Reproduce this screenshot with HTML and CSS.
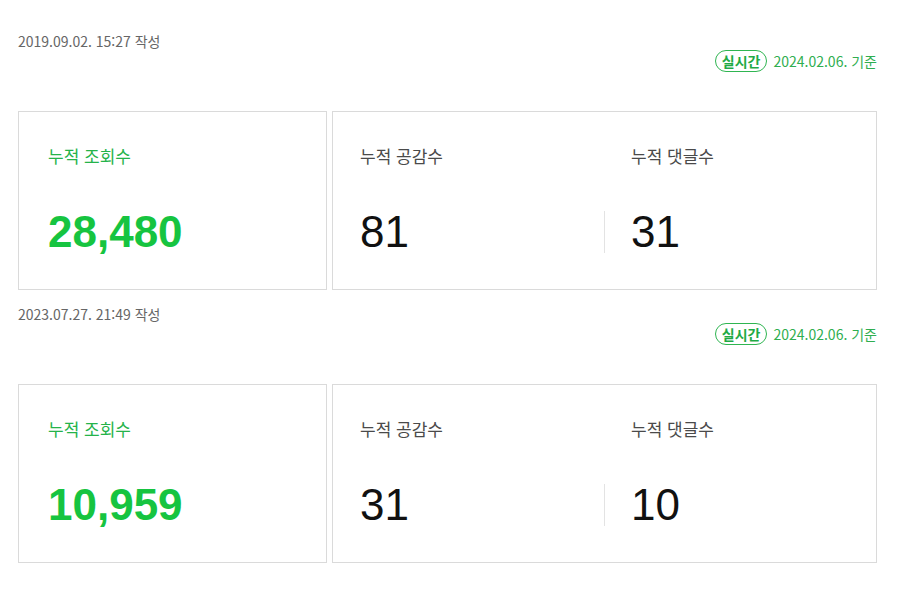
FILE: index.html
```html
<!DOCTYPE html>
<html lang="ko">
<head>
<meta charset="utf-8">
<title>통계</title>
<link rel="stylesheet" href="styles.css">
</head>
<body>
<div class="page">
  <section class="post">
    <div class="date">2019.09.02. 15:27 작성</div>
    <div class="meta">
      <span class="badge">실시간</span>
      <span class="basis">2024.02.06. 기준</span>
    </div>
    <div class="cards">
      <div class="card card-main">
        <div class="label label-green">누적 조회수</div>
        <div class="value value-green">28,480</div>
      </div>
      <div class="card card-sub">
        <div class="col">
          <div class="label">누적 공감수</div>
          <div class="value">81</div>
        </div>
        <div class="col col-right">
          <div class="label">누적 댓글수</div>
          <div class="value value-divided">31</div>
        </div>
      </div>
    </div>
  </section>
  <section class="post">
    <div class="date">2023.07.27. 21:49 작성</div>
    <div class="meta">
      <span class="badge">실시간</span>
      <span class="basis">2024.02.06. 기준</span>
    </div>
    <div class="cards">
      <div class="card card-main">
        <div class="label label-green">누적 조회수</div>
        <div class="value value-green">10,959</div>
      </div>
      <div class="card card-sub">
        <div class="col">
          <div class="label">누적 공감수</div>
          <div class="value">31</div>
        </div>
        <div class="col col-right">
          <div class="label">누적 댓글수</div>
          <div class="value value-divided">10</div>
        </div>
      </div>
    </div>
  </section>
</div>
</body>
</html>
```
FILE: styles.css
```css
* { box-sizing: border-box; }
html, body { margin: 0; padding: 0; background: #fff; }
body {
  font-family: "Noto Sans CJK KR", "Noto Sans", sans-serif;
  color: #333;
}
.page {
  padding: 17px 24px 0 18px;
}
.post {
  padding-top: 15px;
}
.date {
  font-size: 14px;
  line-height: 18px;
  color: #666;
}
.meta {
  display: flex;
  justify-content: flex-end;
  align-items: center;
  gap: 6px;
  height: 22px;
}
.badge {
  display: inline-flex;
  align-items: center;
  height: 22px;
  padding: 0 6px;
  border: 1.5px solid #2fb551;
  border-radius: 11px;
  color: #1faa45;
  font-size: 14px;
  font-weight: 700;
  line-height: 1;
}
.basis {
  font-size: 14px;
  color: #2fae50;
}
.cards {
  display: flex;
  gap: 5px;
  margin-top: 39px;
}
.card {
  height: 179px;
  border: 1px solid #dadada;
  background: #fff;
}
.card-main {
  width: 309px;
  padding: 34px 29px 0 29px;
}
.card-sub {
  flex: 1;
  display: grid;
  grid-template-columns: 1fr 1fr;
  padding: 34px 28px 0 27px;
}
.label {
  font-size: 17px;
  line-height: 20px;
  color: #4a4a4a;
}
.label-green {
  color: #25b34a;
}
.value {
  margin-top: 44px;
  font-family: "Liberation Sans", Arial, sans-serif;
  font-size: 44px;
  line-height: 44px;
  color: #111;
}
.value-green {
  color: #16c440;
  font-weight: 700;
}
.col-right .label {
  padding-left: 27px;
}
.value-divided {
  border-left: 1px solid #e3e3e3;
  padding-left: 26px;
  height: 42px;
  margin-top: 45px;
  line-height: 42px;
}
```
